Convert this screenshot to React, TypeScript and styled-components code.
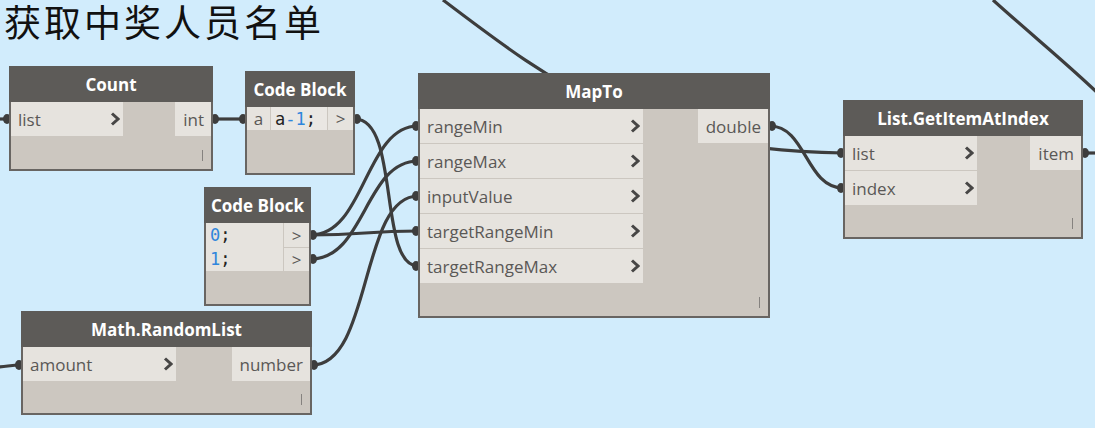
import styled, { createGlobalStyle } from "styled-components"

const Global = createGlobalStyle`
  html, body {
    margin: 0;
    padding: 0;
    background: #d1ecfc;
  }
`

const Canvas = styled.div`
  position: relative;
  width: 1095px;
  height: 428px;
  overflow: hidden;
  background: #d1ecfc;
  font-family: "Open Sans", "Noto Sans", sans-serif;
`

const Title = styled.h1`
  position: absolute;
  left: 4px;
  top: 2px;
  margin: 0;
  font-family: "Noto Sans CJK SC", "Noto Sans", sans-serif;
  font-weight: 400;
  font-size: 37px;
  line-height: 38px;
  letter-spacing: 3px;
  color: #111;
`

const Wires = styled.svg`
  position: absolute;
  left: 0;
  top: 0;
`

const Node = styled.div<{ $x: number; $y: number; $w: number; $h: number }>`
  position: absolute;
  left: ${({ $x }) => $x}px;
  top: ${({ $y }) => $y}px;
  width: ${({ $w }) => $w}px;
  height: ${({ $h }) => $h}px;
  box-sizing: border-box;
  display: flex;
  flex-direction: column;
  background: #ccc7c0;
  border: 2px solid #686562;
  border-top: none;
`

const Header = styled.div`
  height: 36px;
  flex: none;
  margin: 0 -2px;
  background: #5d5b58;
  color: #fff;
  font-weight: 700;
  font-size: 17px;
  display: flex;
  align-items: center;
  justify-content: center;
`

const Body = styled.div`
  display: flex;
  justify-content: space-between;
  align-items: flex-start;
`

const Column = styled.div<{ $w?: number }>`
  display: flex;
  flex-direction: column;
  gap: 1px;
  width: ${({ $w }) => ($w ? `${$w}px` : "auto")};
`

const InRow = styled.div`
  height: 34px;
  display: flex;
  align-items: center;
  justify-content: space-between;
  padding: 0 3px 0 7px;
  background: #e6e3de;
  color: #5a5856;
  font-size: 17px;
`

const OutRow = styled.div`
  height: 34px;
  display: flex;
  align-items: center;
  padding: 0 7px 0 8px;
  background: #e6e3de;
  color: #5a5856;
  font-size: 17px;
`

const Footer = styled.div`
  flex: 1;
  display: flex;
  justify-content: flex-end;
  align-items: flex-end;
  padding: 0 8px 8px 0;
`

const Tick = styled.span`
  width: 1.5px;
  height: 11px;
  background: #85827f;
`

const CodeLine = styled.div`
  display: flex;
  gap: 1px;
  height: 23px;
`

const Cell = styled.div<{ $w?: number; $code?: boolean }>`
  ${({ $w }) => ($w ? `width: ${$w}px; flex: none;` : "flex: 1;")}
  display: flex;
  align-items: center;
  justify-content: ${({ $code }) => ($code ? "flex-start" : "center")};
  padding-left: ${({ $code }) => ($code ? "4px" : "0")};
  background: ${({ $code }) => ($code ? "#eae7e3" : "#e6e3de")};
  color: #5a5856;
  font-size: 17px;
`

const Code = styled.div`
  font-family: "DejaVu Sans Mono", "Liberation Mono", monospace;
  font-size: 17px;
  color: #222;
  white-space: pre;
`

const CodeArea = styled.div`
  width: 77px;
  height: 48px;
  padding: 0 0 0 4px;
  box-sizing: border-box;
  background: #e6e3de;
  display: flex;
  flex-direction: column;
  justify-content: center;
  line-height: 24px;
`

const Num = styled.span`
  color: #2f86dc;
`

const OutCell = styled.div<{ $h: number }>`
  width: 25px;
  height: ${({ $h }) => $h}px;
  display: flex;
  align-items: center;
  justify-content: center;
  background: #e6e3de;
  color: #5a5856;
  font-size: 17px;
`

const Chevron = () => (
  <svg width="10" height="14" viewBox="0 0 10 14">
    <polyline points="2,1.5 8,7 2,12.5" fill="none" stroke="#474645" strokeWidth="3" />
  </svg>
)

type NodeProps = {
  x: number
  y: number
  w: number
  h: number
  title: string
  inW: number
  inputs: string[]
  outputs: string[]
}

function DynNode({ x, y, w, h, title, inW, inputs, outputs }: NodeProps) {
  return (
    <Node $x={x} $y={y} $w={w} $h={h}>
      <Header>{title}</Header>
      <Body>
        <Column $w={inW}>
          {inputs.map((p) => (
            <InRow key={p}>
              {p}
              <Chevron />
            </InRow>
          ))}
        </Column>
        <Column>
          {outputs.map((p) => (
            <OutRow key={p}>{p}</OutRow>
          ))}
        </Column>
      </Body>
      <Footer>
        <Tick />
      </Footer>
    </Node>
  )
}

const wires = [
  "M -4 119 L 9 119",
  "M 213 119 L 245 119",
  "M 355 119 C 400 119, 378 266, 418 266",
  "M 311 235 C 365 235, 365 126, 418 126",
  "M 311 235 C 365 235, 365 231, 418 231",
  "M 311 259 C 365 259, 365 161, 418 161",
  "M 312 365 C 372 365, 360 196, 418 196",
  "M -4 367 C 6 367, 10 365, 21 365",
  "M 770 126 C 806 126, 806 188, 843 188",
  "M 443 0 C 555 85, 640 150, 843 153",
  "M 1083 153 L 1100 153",
  "M 993 0 C 1035 38, 1068 64, 1105 100",
]

const nubs = [
  [7, 119], [215, 119], [243, 119], [357, 119],
  [313, 235], [313, 259], [314, 365], [19, 365],
  [416, 126], [416, 161], [416, 196], [416, 231], [416, 266],
  [772, 126], [841, 153], [841, 188], [1085, 153],
]

export default function App() {
  return (
    <Canvas>
      <Global />
      <Wires width="1095" height="428">
        {wires.map((d) => (
          <path key={d} d={d} fill="none" stroke="#3d3d3d" strokeWidth="3.2" />
        ))}
        {nubs.map(([cx, cy]) => (
          <ellipse key={`${cx}-${cy}`} cx={cx} cy={cy} rx="4" ry="5" fill="#3d3d3d" />
        ))}
      </Wires>
      <Title>获取中奖人员名单</Title>

      <DynNode x={9} y={66} w={204} h={105} title="Count" inW={112} inputs={["list"]} outputs={["int"]} />

      <Node $x={245} $y={71} $w={110} $h={104}>
        <Header>Code Block</Header>
        <CodeLine>
          <Cell $w={23}>a</Cell>
          <Cell $code>
            <Code>
              a<Num>-1</Num>;
            </Code>
          </Cell>
          <Cell $w={25}>&gt;</Cell>
        </CodeLine>
      </Node>

      <Node $x={204} $y={187} $w={107} $h={119}>
        <Header>Code Block</Header>
        <Body>
          <CodeArea>
            <Code>
              <Num>0</Num>;
            </Code>
            <Code>
              <Num>1</Num>;
            </Code>
          </CodeArea>
          <Column>
            <OutCell $h={24}>&gt;</OutCell>
            <OutCell $h={23}>&gt;</OutCell>
          </Column>
        </Body>
      </Node>

      <DynNode
        x={418}
        y={73}
        w={352}
        h={245}
        title="MapTo"
        inW={223}
        inputs={["rangeMin", "rangeMax", "inputValue", "targetRangeMin", "targetRangeMax"]}
        outputs={["double"]}
      />

      <DynNode
        x={843}
        y={100}
        w={240}
        h={139}
        title="List.GetItemAtIndex"
        inW={132}
        inputs={["list", "index"]}
        outputs={["item"]}
      />

      <DynNode
        x={21}
        y={311}
        w={291}
        h={104}
        title="Math.RandomList"
        inW={153}
        inputs={["amount"]}
        outputs={["number"]}
      />
    </Canvas>
  )
}
